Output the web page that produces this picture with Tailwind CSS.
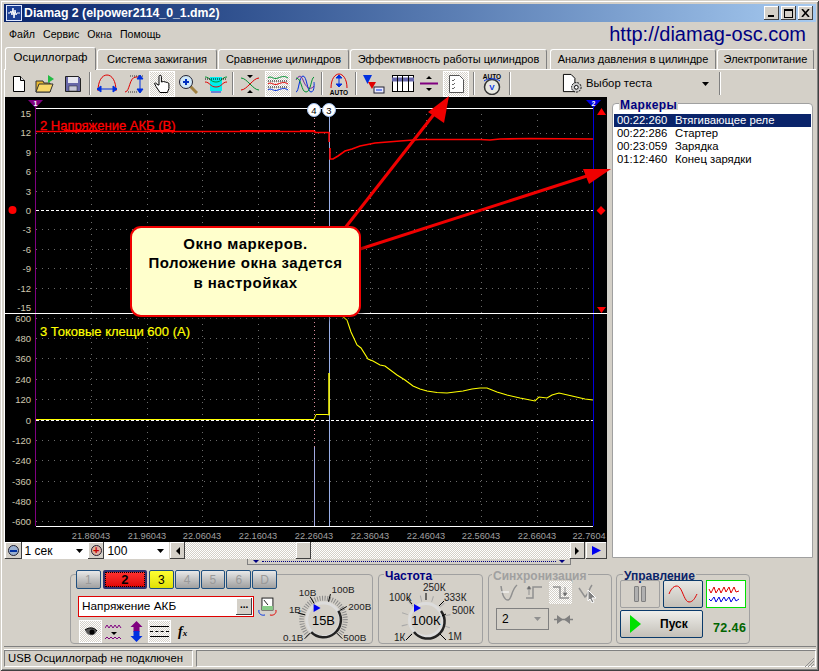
<!DOCTYPE html>
<html lang="ru">
<head>
<meta charset="UTF-8">
<title>Diamag 2</title>
<script src="https://cdn.jsdelivr.net/npm/@tailwindcss/browser@4"></script>
</head>
<body class="bg-[#d4d0c8]">
<div class="relative w-[819px] h-[671px] overflow-hidden bg-[#d4d0c8] font-['Liberation_Sans',sans-serif] text-[11px] leading-none text-black border-t-[1px] border-l-[1px] border-[#d4d0c8] shadow-[inset_-1px_-1px_0_#404040,inset_1px_1px_0_#fff,inset_-2px_-2px_0_#808080]">
  <div class="pt-[3px] px-[3px]">
    <!-- title bar -->
    <div class="h-[18px] flex items-center bg-gradient-to-r from-[#0a246a] to-[#a6caf0] pl-[2px] pr-[3px]">
      <svg width="16" height="16" viewBox="0 0 16 16"><rect x="0.5" y="0.5" width="15" height="15" fill="#1c3f94" stroke="#dfe8ff"/><path d="M2 8h2l1-2 1 4 1-7 1 10 1-8 1 5 1-2h3" fill="none" stroke="#fff"/></svg>
      <span class="ml-[2px] font-bold text-[12.300px] text-white">Diamag 2 (elpower2114_0_1.dm2)</span>
      <div class="ml-auto flex gap-[2px]">
        <div class="w-[15px] h-[14px] bg-[#d4d0c8] shadow-[inset_-1px_-1px_0_#404040,inset_1px_1px_0_#fff] flex items-end justify-center pb-[3px] pr-[2px]"><div class="w-[6px] h-[2px] bg-black"></div></div>
        <div class="w-[15px] h-[14px] bg-[#d4d0c8] shadow-[inset_-1px_-1px_0_#404040,inset_1px_1px_0_#fff] flex items-center justify-center pr-[1px]"><div class="w-[9px] h-[9px] border border-black border-t-2"></div></div>
        <div class="w-[15px] h-[14px] bg-[#d4d0c8] shadow-[inset_-1px_-1px_0_#404040,inset_1px_1px_0_#fff] flex items-center justify-center"><svg width="9" height="8" viewBox="0 0 9 8"><path d="M1 0l7 8M8 0l-7 8" stroke="#000" stroke-width="1.6"/></svg></div>
      </div>
    </div>
    <!-- menu -->
    <div class="h-[24px] flex items-center pl-[5px] gap-[8px] relative text-[10.600px]">
      <span>Файл</span><span>Сервис</span><span>Окна</span><span>Помощь</span>
      <span class="ml-auto mr-[10px] text-[20px] text-[#000080]">http://diamag-osc.com</span>
    </div>
    <!-- tabs -->
    <div class="h-[24px] flex items-end pl-[1px] gap-[1px] border-b border-white">
      <div class="w-[91px] h-[23px] pb-[3px] flex items-center justify-center bg-[#d4d0c8] border border-b-0 border-t-white border-l-white border-r-[#808080] rounded-t-[3px] text-[11.500px] -mb-[1px] relative">Осциллограф</div>
      <div class="w-[120px] h-[20px] flex items-center justify-center border border-b-0 border-t-white border-l-white border-r-[#808080] rounded-t-[3px]">Система зажигания</div>
      <div class="w-[131px] h-[20px] flex items-center justify-center border border-b-0 border-t-white border-l-white border-r-[#808080] rounded-t-[3px]">Сравнение цилиндров</div>
      <div class="w-[197px] h-[20px] flex items-center justify-center border border-b-0 border-t-white border-l-white border-r-[#808080] rounded-t-[3px]">Эффективность работы цилиндров</div>
      <div class="w-[166px] h-[20px] flex items-center justify-center border border-b-0 border-t-white border-l-white border-r-[#808080] rounded-t-[3px] ml-[2px]">Анализ давления в цилиндре</div>
      <div class="w-[97px] h-[20px] flex items-center justify-center border border-b-0 border-t-white border-l-white border-r-[#808080] rounded-t-[3px]">Электропитание</div>
    </div>
    <!-- toolbar -->
    <div class="h-[27px] flex items-center pl-[1px] border-l border-white">
      <div class="w-[25px] h-[25px] flex items-center justify-center"><svg width="14" height="16" viewBox="0 0 14 16"><path d="M1.500.5h7l4 4v11h-11z" fill="#fff" stroke="#000"/><path d="M8.500.5v4h4" fill="#ddd" stroke="#000"/></svg></div>
      <div class="w-[27px] h-[25px] flex items-center justify-center"><svg width="20" height="20" viewBox="0 0 20 20"><path d="M1 7h7l1 2h6v9H1z" fill="#e8b830" stroke="#333"/><path d="M1 18l3-8h14l-3 8z" fill="#f8d868" stroke="#333"/><path d="M13 1l6 4-6 4z" fill="#22bb44"/></svg></div>
      <div class="w-[29px] h-[25px] flex items-center justify-center"><svg width="16" height="16" viewBox="0 0 16 16"><path d="M.5.5h13l2 2v13H.5z" fill="#6868a8" stroke="#222"/><rect x="3" y="1" width="10" height="6" fill="#e8e8f0"/><rect x="4" y="10" width="8" height="5" fill="#c8c8d8" stroke="#222" stroke-width=".5"/></svg></div>
      <div class="ml-[2px] w-[2px] h-[23px] border-l border-r border-l-[#808080] border-r-white"></div>
      <div class="ml-[2px] w-[28px] h-[25px] flex items-center justify-center"><svg width="22" height="20" viewBox="0 0 22 20"><path d="M2 17C2 7 6 1 11 1s9 6 9 16" fill="none" stroke="#e00000"/><path d="M1 15h20M1 15l4-3v6zM21 15l-4-3v6z" fill="#0030e0" stroke="#0030e0"/></svg></div>
      <div class="w-[28px] h-[25px] flex items-center justify-center"><svg width="22" height="20" viewBox="0 0 22 20"><path d="M1 18c5 0 4-15 11-15h3" fill="none" stroke="#e00000"/><path d="M6 2h14M4 18h10" stroke="#333" stroke-dasharray="1 1"/><path d="M16 2v16M13 5l3-4 3 4zM13 15l3 4 3-4z" fill="#0030e0" stroke="#0030e0"/></svg></div>
      <div class="w-[26px] h-[26px] flex items-center justify-center bg-[repeating-conic-gradient(#fff_0_25%,#d4d0c8_0_50%)] bg-[length:2px_2px] shadow-[inset_-1px_-1px_0_#fff,inset_1px_1px_0_#fff]"><svg width="18" height="20" viewBox="0 0 18 20"><path d="M6 11V2.500a1.200 1.200 0 0 1 2.400 0V8l2-.5 2 .5 2 .5 1.500 1v5l-1.500 4H7l-4-6-1.500-3 1-.5 2.500 2z" fill="#fff" stroke="#000"/></svg></div>
      <div class="w-[26px] h-[25px] flex items-center justify-center"><svg width="20" height="20" viewBox="0 0 20 20"><path d="M12 12l7 7" stroke="#a08040" stroke-width="3"/><circle cx="8" cy="8" r="6.500" fill="#d0e8f8" stroke="#223"/><path d="M5 8h6M8 5v6" stroke="#0030c0" stroke-width="2"/></svg></div>
      <div class="w-[30px] h-[25px] flex items-center justify-center"><svg width="24" height="20" viewBox="0 0 24 20"><rect x="6" y="3" width="12" height="14" fill="#00eeee"/><path d="M1 3c5 0 5 5 11 5s6-5 11-5" fill="none" stroke="#009030"/><path d="M1 8c5 0 5 5 11 5s6-5 11-5" fill="none" stroke="#e00000"/><path d="M1 5h22" stroke="#000" stroke-dasharray="1 1"/><path d="M7 18h10" stroke="#0030e0"/></svg></div>
      <div class="ml-[1px] w-[2px] h-[23px] border-l border-r border-l-[#808080] border-r-white"></div>
      <div class="ml-[2px] w-[28px] h-[25px] flex items-center justify-center"><svg width="20" height="20" viewBox="0 0 20 20"><path d="M1 4c6 0 12 12 18 12" fill="none" stroke="#009030"/><path d="M1 16c6 0 12-12 18-12" fill="none" stroke="#e00000"/><path d="M7 1h6l-3 3zM7 19h6l-3-3z"/></svg></div>
      <div class="ml-[1px] w-[26px] h-[26px] flex items-center justify-center bg-[repeating-conic-gradient(#fff_0_25%,#d4d0c8_0_50%)] bg-[length:2px_2px] shadow-[inset_-1px_-1px_0_#fff,inset_1px_1px_0_#fff]"><svg width="20" height="18" viewBox="0 0 20 18"><path d="M0 3c3-3 5 2 10 0s7-2 10 0" fill="none" stroke="#009030"/><path d="M0 9c3-3 5 2 10 0s7-2 10 0" fill="none" stroke="#e00000"/><path d="M0 15c3-3 5 2 10 0s7-2 10 0" fill="none" stroke="#0030e0"/><path d="M0 6h20M0 12h20" stroke="#000" stroke-dasharray="1 1"/></svg></div>
      <div class="ml-[1px] w-[26px] h-[25px] flex items-center justify-center"><svg width="20" height="20" viewBox="0 0 20 20"><path d="M1 18C4 18 4 2 8 2s4 16 8 16 3-10 3-10" fill="none" stroke="#0030e0"/><path d="M1 6c3-5 5-5 7 0s6 12 11 6" fill="none" stroke="#7020a0"/><path d="M1 4c6 0 5 14 10 14S16 4 19 3" fill="none" stroke="#009030"/></svg></div>
      <div class="ml-[3px] w-[2px] h-[23px] border-l border-r border-l-[#808080] border-r-white"></div>
      <div class="ml-[2px] w-[28px] h-[25px] flex items-center justify-center"><svg width="20" height="22" viewBox="0 0 20 22"><path d="M2 15C2 6 6 1 10 1s8 5 8 14" fill="none" stroke="#e00000"/><path d="M10 3v10M7 5l3-3 3 3zM7 11l3 3 3-3z" fill="#0030e0" stroke="#0030e0"/><text x="10" y="21.500" text-anchor="middle" class="font-bold text-[6.500px]">AUTO</text></svg></div>
      <div class="ml-[2px] w-[2px] h-[23px] border-l border-r border-l-[#808080] border-r-white"></div>
      <div class="ml-[2px] w-[28px] h-[25px] flex items-center justify-center"><svg width="23" height="20" viewBox="0 0 23 20"><path d="M1 1h9l-4.500 9z" fill="#0030e0"/><path d="M6 8h8l-4 7z" fill="#e00000"/><rect x="12" y="13" width="10" height="6" fill="#e8e8ff" stroke="#223"/><path d="M14 16h6" stroke="#0030e0"/></svg></div>
      <div class="ml-[2px] w-[27px] h-[25px] flex items-center justify-center"><svg width="22" height="17" viewBox="0 0 22 17"><rect x=".5" y=".5" width="21" height="16" fill="#fff" stroke="#000"/><path d="M0 4.500h22" stroke="#66a" stroke-width="4"/><path d="M5.500 0v17M10.500 0v17M16.500 0v17" stroke="#000"/></svg></div>
      <div class="w-[26px] h-[25px] flex items-center justify-center"><svg width="20" height="17" viewBox="0 0 20 17"><path d="M1 8.500h18" stroke="#800080" stroke-width="2"/><path d="M7 4l3-3 3 3zM7 13l3 3 3-3z"/></svg></div>
      <div class="ml-[1px] w-[26px] h-[26px] flex items-center justify-center bg-[repeating-conic-gradient(#fff_0_25%,#d4d0c8_0_50%)] bg-[length:2px_2px] shadow-[inset_-1px_-1px_0_#fff,inset_1px_1px_0_#fff]"><svg width="15" height="18" viewBox="0 0 15 18"><path d="M.5.500h10l4 4v13H.5z" fill="#fff" stroke="#555"/><path d="M3 5l1 1 2-2M3 9l1 1 2-2M3 13l1 1 2-2" fill="none" stroke="#666"/></svg></div>
      <div class="ml-[4px] w-[2px] h-[23px] border-l border-r border-l-[#808080] border-r-white"></div>
      <div class="ml-[2px] w-[30px] h-[25px] flex items-center justify-center"><svg width="20" height="22" viewBox="0 0 20 22"><text x="10" y="5.500" text-anchor="middle" class="font-bold text-[6.500px]">AUTO</text><circle cx="10" cy="14" r="7.500" fill="#e8e8e0" stroke="#333" stroke-width="1.500"/><text x="10" y="17" text-anchor="middle" fill="#0030e0" class="font-bold text-[8px]">V</text><path d="M2 8c4-3 12-3 16 0" fill="none" stroke="#0030e0"/></svg></div>
      <div class="ml-[2px] w-[2px] h-[23px] border-l border-r border-l-[#808080] border-r-white"></div>
      <div class="w-[208px] h-[25px] flex items-center pl-[51px]">
        <svg width="21" height="21" viewBox="0 0 22 22"><path d="M1.500 1.500h8l4 4v14h-12z" fill="#fff" stroke="#000"/><circle cx="15" cy="15" r="5" fill="#ccc" stroke="#000" stroke-dasharray="2 1"/><circle cx="15" cy="15" r="2" fill="#fff" stroke="#000"/></svg>
        <span class="ml-[3px] text-[11.300px]">Выбор теста</span>
        <svg class="ml-auto mr-[10px]" width="7" height="4" viewBox="0 0 7 4"><path d="M0 0h7L3.500 4z"/></svg>
      </div>
      <div class="w-[2px] h-[23px] border-l border-r border-l-[#808080] border-r-white"></div>
    </div>
    <!-- main row -->
    <div class="flex h-[461px] border-l border-white">
      <div class="w-[602px]">
        <svg class="block bg-black" width="602" height="445" viewBox="5 97 602 445">
          <g stroke="#6a6a6a" stroke-dasharray="1 5">
            <path d="M36 133.500H593M36 152.500H593M36 171.500H593M36 191.500H593M36 229.500H593M36 249.500H593M36 268.500H593M36 288.500H593M36 318.500H593M36 338.500H593M36 358.500H593M36 379.500H593M36 399.500H593M36 440.500H593M36 460.500H593M36 481.500H593M36 501.500H593M36 521.500H593"/>
            <path d="M91.500 108V526M147.500 108V526M202.500 108V526M258.500 108V526M370.500 108V526M426.500 108V526M481.500 108V526M537.500 108V526"/>
          </g>
          <path d="M36 210.500H593M36 420.500H593" stroke="#fff" stroke-dasharray="3 2"/>
          <path d="M35.500 104V526" stroke="#800080"/>
          <path d="M593.500 104V526" stroke="#0000e0"/>
          <path d="M314.500 114V447" stroke="#e090a0" stroke-dasharray="1 3"/>
          <path d="M314.500 447V526" stroke="#a0a8e0"/>
          <path d="M329.500 114V526" stroke="#9ab0e8"/>
          <path d="M36 108.500H593M5 313.500H607M36 526.500H593" stroke="#fff"/>
          <path d="M36 131.500H315V132.500H329V142" fill="none" stroke="#ff0000" stroke-width="1.500"/>
          <path d="M64 130.500H100M150 130.500H175M240 130.500H280M300 130.500H314" stroke="#ff0000"/>
          <path d="M330 148V159H333L338 156L345 151L352 149L360 146L375 143L400 141L420 139.500L480 139.500L490 140L500 139L530 138.500L593 139" fill="none" stroke="#ff0000" stroke-width="1.600"/>
          <path d="M36 419.500H314L316 414.500H327L329 415" fill="none" stroke="#ffff00"/>
          <path d="M329 373V415" stroke="#ffff00" stroke-width="1.500"/>
          <path d="M342 316L347 320L351 332L357 345L361 348L368 359L373 361L380 365L385 366L397 375L405 380L413 386L420 389L427 391L437 392.500L447 393L463 391L472 389L480 388L487 388L497 392L507 395L520 398L535 401L539 397L547 398L552 395L559 393L572 396L585 399L593 400" fill="none" stroke="#ffff00" stroke-width="1.100"/>
          <path d="M28 100H43L35.500 108z" fill="#800080"/>
          <path d="M586 100H601L593.500 108z" fill="#0000e0"/>
          <text x="35.500" y="106" text-anchor="middle" fill="#fff" class="font-bold text-[7px]">1</text>
          <text x="593.500" y="106" text-anchor="middle" fill="#fff" class="font-bold text-[7px]">2</text>
          <circle cx="314" cy="110" r="6.500" fill="#fff" stroke="#a0c0f0"/>
          <circle cx="329" cy="110" r="6.500" fill="#fff" stroke="#a0c0f0"/>
          <text x="314" y="113.500" text-anchor="middle" class="text-[9.500px]" fill="#000">4</text>
          <text x="329" y="113.500" text-anchor="middle" class="text-[9.500px]" fill="#000">3</text>
          <circle cx="12.500" cy="210" r="4" fill="#ff0000"/>
          <path d="M597 115H606L601.500 108zM601 206L605.500 210.500L601 215L596.500 210.500zM597 307H606L601.500 313z" fill="#ff0000"/>
          <g fill="#d0c8b0" text-anchor="end" class="text-[9.500px]">
            <text x="31" y="117">15</text><text x="31" y="136">12</text><text x="31" y="156">9</text><text x="31" y="175">6</text><text x="31" y="195">3</text><text x="31" y="214">0</text><text x="31" y="233">-3</text><text x="31" y="253">-6</text><text x="31" y="272">-9</text><text x="31" y="292">-12</text><text x="31" y="311">-15</text>
            <text x="31" y="322">600</text><text x="31" y="342">480</text><text x="31" y="362">360</text><text x="31" y="383">240</text><text x="31" y="403">120</text><text x="31" y="424">0</text><text x="31" y="444">-120</text><text x="31" y="464">-240</text><text x="31" y="485">-360</text><text x="31" y="505">-480</text><text x="31" y="525">-600</text>
          </g>
          <g fill="#a0a0a0" text-anchor="middle" class="text-[9.200px]">
            <text x="91" y="539">21.86043</text><text x="147" y="539">21.96043</text><text x="202" y="539">22.06043</text><text x="258" y="539">22.16043</text><text x="314" y="539">22.26043</text><text x="370" y="539">22.36043</text><text x="426" y="539">22.46043</text><text x="481" y="539">22.56043</text><text x="537" y="539">22.66043</text><text x="589" y="539">22.7604</text>
          </g>
          <text x="40" y="130" fill="#ff0000" stroke="#ff0000" stroke-width="0.300" class="text-[13px]">2 Напряжение АКБ (В)</text>
          <text x="40" y="336" fill="#ffff00" stroke="#ffff00" stroke-width="0.200" class="text-[13px]">3 Токовые клещи 600 (А)</text>
        </svg>
        <!-- scroll row -->
        <div class="h-[17px] flex items-center">
          <div class="w-[17px] h-[17px] bg-[#d4d0c8] shadow-[inset_-1px_-1px_0_#404040,inset_1px_1px_0_#fff] flex items-center justify-center"><div class="w-[11px] h-[11px] rounded-full border border-[#223] bg-[#9ab0d0] flex items-center justify-center"><div class="w-[7px] h-[2px] bg-[#0030a0]"></div></div></div>
          <div class="w-[68px] h-[17px] bg-white flex items-center pl-[3px] text-[12px]">1 сек<svg class="ml-auto mr-[5px]" width="7" height="4" viewBox="0 0 7 4"><path d="M0 0h7L3.500 4z"/></svg></div>
          <div class="w-[17px] h-[17px] bg-[#d4d0c8] shadow-[inset_-1px_-1px_0_#404040,inset_1px_1px_0_#fff] flex items-center justify-center"><div class="w-[11px] h-[11px] rounded-full border border-[#223] bg-[#e0b0a0] flex items-center justify-center text-[#c00000] text-[11px] font-bold">+</div></div>
          <div class="w-[66px] h-[17px] bg-white flex items-center pl-[3px] text-[12px]">100<svg class="ml-auto mr-[5px]" width="7" height="4" viewBox="0 0 7 4"><path d="M0 0h7L3.500 4z"/></svg></div>
          <div class="ml-[1px] w-[16px] h-[17px] bg-[#d4d0c8] shadow-[inset_-1px_-1px_0_#404040,inset_1px_1px_0_#fff] flex items-center justify-center"><svg width="4" height="8" viewBox="0 0 4 8"><path d="M4 0v8L0 4z"/></svg></div>
          <div class="w-[395px] h-[17px] flex bg-[repeating-conic-gradient(#fff_0_25%,#d4d0c8_0_50%)] bg-[length:2px_2px]">
            <div class="ml-[111px] w-[15px] h-[17px] bg-[#d4d0c8] shadow-[inset_-1px_-1px_0_#404040,inset_1px_1px_0_#fff]"></div>
          </div>
          <div class="w-[15px] h-[17px] bg-[#d4d0c8] shadow-[inset_-1px_-1px_0_#404040,inset_1px_1px_0_#fff] flex items-center justify-center"><svg width="4" height="8" viewBox="0 0 4 8"><path d="M0 0v8l4-4z"/></svg></div>
          <div class="ml-[1px] w-[22px] h-[17px] bg-[#d4d0c8] shadow-[inset_-1px_-1px_0_#404040,inset_1px_1px_0_#fff] flex items-center justify-center"><svg width="9" height="9" viewBox="0 0 9 9"><path d="M0 0v9l9-4.500z" fill="#0000f0"/></svg></div>
        </div>
      </div>
      <!-- markers -->
      <div class="ml-[5px] mt-[6px] w-[201px] h-[455px] border border-[#a0a0a0] rounded-t-[4px] bg-white flex flex-col">
        <div class="-mt-[4px] ml-[6px] px-[1px] w-fit bg-[#d4d0c8] h-[10px] flex items-center font-bold text-[#000080] text-[12px] tracking-[0.4px]">Маркеры</div>
        <div class="pt-[4px] px-[1px] text-[11.300px]">
          <div class="h-[13px] flex items-center bg-[#0a246a] text-white pl-[3px]"><span class="w-[58px]">00:22:260</span><span>Втягивающее реле</span></div>
          <div class="h-[13px] flex items-center pl-[3px]"><span class="w-[58px]">00:22:286</span><span>Стартер</span></div>
          <div class="h-[13px] flex items-center pl-[3px]"><span class="w-[58px]">00:23:059</span><span>Зарядка</span></div>
          <div class="h-[13px] flex items-center pl-[3px]"><span class="w-[58px]">01:12:460</span><span>Конец зарядки</span></div>
        </div>
      </div>
    </div>
    <!-- splitter -->
    <div class="h-[7px] ml-[243px] w-[324px] border border-t-0 border-[#808080] flex items-center justify-between pl-[5px] pr-[5px]">
      <svg width="6" height="3" viewBox="0 0 6 3"><path d="M0 0h6L3 3z" fill="#000080"/></svg>
      <div class="flex-1 mx-[3px] border-t border-dotted border-[#000080]"></div>
      <svg width="6" height="3" viewBox="0 0 6 3"><path d="M0 0h6L3 3z" fill="#000080"/></svg>
    </div>
    <!-- control panel -->
    <div class="h-[82px] flex items-start pt-[9px] pl-[66px] border-b border-[#808080]">
      <!-- channel group -->
      <div class="w-[303px] h-[70px] border border-[#a0a0a0] rounded-[4px] mr-[5px] flex">
        <div class="w-[206px] -mt-[5px] pl-[5px] h-[69px]">
          <div class="flex gap-[1px] h-[19px] text-[12px] text-[#9a9a9a] bg-[#d4d0c8]">
            <div class="w-[26px] border border-[#1f4f7f] rounded-[2px] bg-gradient-to-b from-[#e8e8e8] to-[#a0a0a0] flex items-center justify-center">1</div>
            <div class="w-[46px] ml-[1px] border-2 border-[#303070] rounded-[2px] bg-gradient-to-b from-[#ff3030] to-[#e00000] flex items-center justify-center text-black font-bold text-[13px] outline outline-1 outline-dotted outline-offset-[-3px] outline-black">2</div>
            <div class="w-[26px] ml-[1px] border border-[#1f4f7f] rounded-[2px] bg-gradient-to-b from-[#ffff30] to-[#e0e000] flex items-center justify-center text-black">3</div>
            <div class="w-[26px] border border-[#1f4f7f] rounded-[2px] bg-gradient-to-b from-[#e8e8e8] to-[#a0a0a0] flex items-center justify-center">4</div>
            <div class="w-[26px] border border-[#1f4f7f] rounded-[2px] bg-gradient-to-b from-[#e8e8e8] to-[#a0a0a0] flex items-center justify-center">5</div>
            <div class="w-[26px] border border-[#1f4f7f] rounded-[2px] bg-gradient-to-b from-[#e8e8e8] to-[#a0a0a0] flex items-center justify-center">6</div>
            <div class="w-[26px] border border-[#1f4f7f] rounded-[2px] bg-gradient-to-b from-[#e8e8e8] to-[#a0a0a0] flex items-center justify-center">D</div>
          </div>
          <div class="mt-[7px] flex items-center">
            <div class="ml-[2px] w-[177px] h-[21px] border border-[#e00000] bg-white flex items-center pl-[3px] text-[11.800px]">Напряжение АКБ<div class="ml-auto mr-[1px] w-[16px] h-[17px] bg-[#d4d0c8] shadow-[inset_-1px_-1px_0_#404040,inset_1px_1px_0_#fff] flex items-center justify-center font-bold text-[10px] pb-[4px]">...</div></div>
            <svg class="ml-[3px]" width="20" height="20" viewBox="0 0 20 20"><rect x="5" y="1" width="11" height="12" fill="#fff" stroke="#222"/><rect x="5" y="9" width="11" height="4" fill="#88cc88"/><path d="M7 3l4 5" stroke="#222"/><path d="M2 13c-1 4 3 6 6 5" fill="none" stroke="#0030e0"/><path d="M19 13c1 4-3 6-6 5" fill="none" stroke="#e00000"/></svg>
          </div>
          <div class="mt-[3px] ml-[3px] flex items-center h-[23px]">
            <div class="w-[23px] h-[23px] flex items-center justify-center bg-[repeating-conic-gradient(#fff_0_25%,#d4d0c8_0_50%)] bg-[length:2px_2px] shadow-[inset_-1px_-1px_0_#fff,inset_1px_1px_0_#fff]"><svg width="14" height="10" viewBox="0 0 14 10"><path d="M1 3c4-3 9-3 12 1-2 5-8 6-11 1z" fill="#555"/><circle cx="8" cy="5" r="2.500" fill="#000"/><path d="M1 3c4-3 9-3 12 1" fill="none" stroke="#000"/></svg></div>
            <svg class="ml-[3px]" width="18" height="18" viewBox="0 0 18 18"><path d="M0 5l2-3 2 3 2-3 2 3 2-3 2 3 2-3 2 3M0 16l2-2 2 2 2-2 2 2 2-2 2 2 2-2 2 2" fill="none" stroke="#800080"/><path d="M6 9h6l-3 3z"/></svg>
            <svg class="ml-[5px]" width="17" height="21" viewBox="0 0 17 21"><path d="M8.500 0l6 6h-3v5H5.500V6h-3z" fill="#800080"/><path d="M8.500 21l6-6h-3V10H5.500v5h-3z" fill="#0030e0"/></svg>
            <div class="ml-[3px] w-[23px] h-[23px] flex flex-col justify-center gap-[4px] px-[2px] bg-[repeating-conic-gradient(#fff_0_25%,#d4d0c8_0_50%)] bg-[length:2px_2px] shadow-[inset_-1px_-1px_0_#fff,inset_1px_1px_0_#fff]"><div class="border-t border-black"></div><div class="border-t border-dashed border-black"></div><div class="border-t border-black"></div></div>
            <span class="ml-[7px] font-['Liberation_Serif'] italic font-bold text-[14px]">f<span class="text-[9px]">x</span></span>
          </div>
        </div>
        <svg class="block -mt-[8px]" width="96" height="78" viewBox="0 0 96 78">
          <path d="M31.400 68.600A22 22 0 1 1 62.600 68.600" fill="none" stroke="#8a8a8a" stroke-width="5" stroke-dasharray="1 1.500"/>
          <circle cx="47" cy="53" r="17" fill="#d4d0c8" stroke="#dcdcdc" stroke-width="3"/>
          <path d="M34.600 65.400A17.500 17.500 0 0 0 62 44" fill="none" stroke="#222" stroke-width="2.500"/>
          <path d="M37 37v8l7-4z" fill="#0000f0"/>
          <path d="M33.600 66.400L27.900 72.100M28.600 48L20.900 46M37.500 36.500L33.500 29.600M52 34.600L54 27M63.500 43.500L70.500 39.500M60.400 66.400L66 72" stroke="#000"/>
          <text x="47" y="58" text-anchor="middle" class="text-[13px]">15В</text>
          <g fill="#222" class="text-[10px]"><text x="22" y="29">10В</text><text x="55" y="26">100В</text><text x="12" y="46">1В</text><text x="72" y="43">200В</text><text x="6" y="74">0.1В</text><text x="67" y="74">500В</text></g>
        </svg>
      </div>
      <!-- frequency -->
      <div class="w-[105px] h-[70px] border border-[#a0a0a0] rounded-[4px] mr-[5px]">
        <div class="-mt-[5px] ml-[5px] px-[1px] w-fit bg-[#d4d0c8] h-[11px] flex items-center font-bold text-[#000080] text-[12px]">Частота</div>
        <svg class="block -mt-[8px]" width="103" height="72" viewBox="0 0 103 72">
          <path d="M31.400 62.600A22 22 0 1 1 62.600 62.600" fill="none" stroke="#a8a8a8" stroke-width="6" stroke-dasharray="1 10.500"/>
          <circle cx="47" cy="47" r="16.500" fill="#d4d0c8" stroke="#dcdcdc" stroke-width="3"/>
          <path d="M35 59A16.500 16.500 0 0 0 62 38" fill="none" stroke="#222" stroke-width="2.500"/>
          <path d="M35 31v8l7-4z" fill="#0000f0"/>
          <path d="M47 27V20M33 31L28 25M60 33L65 28M63 43L67 41M33 61L27 67M61 61L67 67" stroke="#000"/>
          <text x="47" y="52" text-anchor="middle" class="text-[13px]">100К</text>
          <g fill="#222" class="text-[10px]"><text x="44" y="18">250К</text><text x="65" y="28">333К</text><text x="73" y="41">500К</text><text x="10" y="28">100К</text><text x="15" y="68">1К</text><text x="69" y="67">1М</text></g>
        </svg>
      </div>
      <!-- sync -->
      <div class="w-[124px] h-[70px] border border-[#a0a0a0] rounded-[4px] mr-[4px]">
        <div class="-mt-[5px] ml-[3px] px-[1px] w-fit bg-[#d4d0c8] h-[11px] flex items-center font-bold text-[#a0a0a0] text-[12px]">Синхронизация</div>
        <div class="ml-[11px] flex items-center h-[23px] gap-[7px]">
          <svg width="18" height="18" viewBox="0 0 18 18"><path d="M1 2c1 8 3 14 7 14S11 6 17 1" fill="none" stroke="#909090" stroke-width="1.500"/><path d="M1 8h8" stroke="#fff"/></svg>
          <svg width="18" height="18" viewBox="0 0 18 18"><path d="M1 14h7V3h9" fill="none" stroke="#909090" stroke-width="1.500"/><path d="M4 11V3M2 5l2-3 2 3z" stroke="#909090"/></svg>
          <div class="w-[23px] h-[23px] -mx-[1px] flex items-center justify-center bg-[repeating-conic-gradient(#fff_0_25%,#d4d0c8_0_50%)] bg-[length:2px_2px]"><svg width="18" height="18" viewBox="0 0 18 18"><path d="M1 3h7v11h9" fill="none" stroke="#909090" stroke-width="1.500"/><path d="M13 3v8M11 9l2 3 2-3z" stroke="#909090"/></svg></div>
          <svg width="20" height="20" viewBox="0 0 20 20"><path d="M1 5l6 9c3-2 4-8 7-12" fill="none" stroke="#909090" stroke-width="1.500"/><path d="M10 7l8 8-4 0 2 4-2 1-2-4-2 2z" fill="#808080" stroke="#fff"/></svg>
        </div>
        <div class="mt-[4px] ml-[7px] flex items-center">
          <div class="w-[53px] h-[22px] border border-[#808080] flex items-center pl-[5px] text-[12px]">2<svg class="ml-auto mr-[7px]" width="7" height="4" viewBox="0 0 7 4"><path d="M0 0h7L3.500 4z" fill="#909090"/></svg></div>
          <svg class="ml-[5px]" width="19" height="9" viewBox="0 0 19 9"><path d="M0 4.500h19" stroke="#808080" stroke-width="1.500"/><path d="M3 0l6 4.500-6 4.500zM16 0l-6 4.500 6 4.500z" fill="#808080"/></svg>
        </div>
      </div>
      <!-- control -->
      <div class="w-[134px] h-[70px] border border-[#a0a0a0] rounded-[4px]">
        <div class="-mt-[5px] ml-[6px] px-[1px] w-fit bg-[#d4d0c8] h-[11px] flex items-center font-bold text-[#0a246a] text-[12px]">Управление</div>
        <div class="-mt-[1px] ml-[3px] flex gap-[3px]">
          <div class="w-[40px] h-[28px] border border-[#a0a0a0] rounded-[2px] flex items-center justify-center gap-[2px]"><div class="w-[5px] h-[16px] border border-[#808080] bg-[#b0b0b0] rounded-[1px]"></div><div class="w-[5px] h-[16px] border border-[#808080] bg-[#b0b0b0] rounded-[1px]"></div></div>
          <div class="w-[40px] h-[28px] border border-[#0a3a6a] rounded-[2px] bg-gradient-to-b from-[#e8e8e4] to-[#c4c0b8] flex items-center justify-center"><svg width="30" height="20" viewBox="0 0 30 20"><path d="M1 10C4 2 9 0 12 4s5 14 9 14 6-4 8-8" fill="none" stroke="#e00000"/></svg></div>
          <div class="w-[40px] h-[28px] border border-[#00e000] bg-white flex items-center justify-center"><svg width="36" height="22" viewBox="0 0 36 22"><path d="M1 6l2 4 3-6 2 6 3-5 2 5 3-6 2 5 3-5 2 6 3-6 2 5 3-1" fill="none" stroke="#e00000"/><path d="M1 16l2 2 3-4 2 5 3-5 2 5 3-5 2 4 3-4 2 5 3-5 2 4 3-2" fill="none" stroke="#0000e0"/></svg></div>
        </div>
        <div class="mt-[2px] ml-[3px] flex items-center">
          <div class="w-[83px] h-[28px] border border-[#0a3a6a] rounded-[2px] bg-gradient-to-b from-[#eeeeea] to-[#c4c0b8] flex items-center pl-[9px]">
            <svg width="11" height="18" viewBox="0 0 11 18"><path d="M0 0l11 9L0 18z" fill="#00e000"/></svg>
            <span class="ml-[19px] font-bold text-[12px]">Пуск</span>
          </div>
          <span class="ml-[10px] font-bold text-[12.500px] text-[#006400] tracking-[0.4px] mt-[8px]">72.46</span>
        </div>
      </div>
    </div>
    <!-- status bar -->
    <div class="mt-[2px] h-[18px] flex gap-[3px] border-t border-white">
      <div class="w-[189px] h-[17px] border border-[#808080] border-r-white border-b-white flex items-center pl-[3px] text-[11.300px]">USB Осциллограф не подключен</div>
      <div class="flex-1 h-[17px] border border-[#808080] border-r-white border-b-white relative"></div>
    </div>
  </div>
  <!-- annotation overlay -->
  <svg class="absolute left-[-1px] top-[-1px] pointer-events-none" width="819" height="671" viewBox="0 0 819 671">
    <path d="M345 228L435 113" stroke="#f00000" stroke-width="3"/>
    <path d="M449 96L428 112L444 123z" fill="#f00000"/>
    <path d="M357 250L590 175" stroke="#f00000" stroke-width="3"/>
    <path d="M611 169L583 169L589 184z" fill="#f00000"/>
    <path d="M808 667l6-6M811 667l3-3M805 667l9-9" stroke="#909090"/>
  </svg>
  <div class="absolute left-[129px] top-[225px] w-[231px] h-[91px] rounded-[11px] border-2 border-[#f00000] bg-[#ffffcc] shadow-[3px_3px_4px_rgba(0,0,0,0.4)] flex flex-col items-center justify-center pb-[17px] font-bold tracking-[0.5px] text-[15px] leading-[19.500px] text-black">
    <span>Окно маркеров.</span><span>Положение окна задется</span><span>в настройках</span>
  </div>
</div>
</body>
</html>
